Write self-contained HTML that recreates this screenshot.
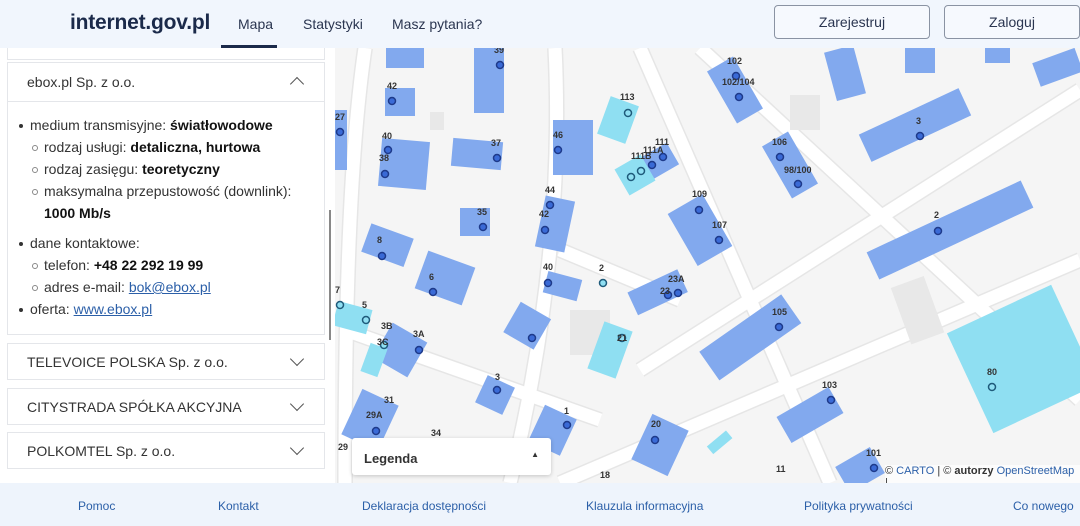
<!DOCTYPE html>
<html><head><meta charset="utf-8"><style>
*{margin:0;padding:0;box-sizing:border-box}
body{width:1080px;height:526px;overflow:hidden;font-family:"Liberation Sans",sans-serif;background:#fff;position:relative}
.hdr{position:absolute;left:0;top:0;width:1080px;height:48px;background:#f1f6fd;z-index:5}
.logo{position:absolute;left:70px;top:11px;font-size:21px;font-weight:bold;color:#1b2a4a;letter-spacing:-0.2px}
.nav{position:absolute;top:16px;font-size:14px;color:#2a3550}
.ul{position:absolute;left:221px;top:45px;width:56px;height:3px;background:#1b2a4a}
.btn{position:absolute;top:5px;height:34px;border:1px solid #8a93a3;border-radius:4px;background:#f6f9fe;font-size:14px;color:#2a3550;text-align:center;line-height:32px}
.left{position:absolute;left:0;top:48px;width:335px;height:435px;background:#fff;overflow:hidden}
.card{position:absolute;left:7px;width:318px;border:1px solid #e4e6ea;background:#fff;font-size:14px;color:#333}
.ch{height:38px;line-height:38px;padding-left:19px}
.chev{position:absolute;right:22px;top:10px;width:10px;height:10px;border-right:1.5px solid #555;border-bottom:1.5px solid #555;transform:rotate(45deg)}
.chev.up{transform:rotate(-135deg);top:16px}
.body{padding:12px 0 0 10px;border-top:1px solid #e4e6ea;font-size:14px;line-height:22px;color:#333}
.body b{color:#111}
.l1{position:relative;padding-left:12px}
.l1:before{content:"";position:absolute;left:1px;top:10px;width:4px;height:4px;border-radius:50%;background:#333}
.l2{position:relative;padding-left:26px}
.l2:before{content:"";position:absolute;left:14px;top:9px;width:4px;height:4px;border-radius:50%;border:1px solid #888}
a{color:#2b5fa8;text-decoration:underline}
.map{position:absolute;left:335px;top:48px;width:745px;height:435px;background:#f5f5f5;overflow:hidden}
.ftr{position:absolute;left:0;top:483px;width:1080px;height:43px;background:#eef4fc}
.ftr span{position:absolute;top:16px;font-size:12px;color:#2b5fa8}
.leg{position:absolute;left:352px;top:438px;width:199px;height:37px;background:#fff;border-radius:3px;box-shadow:0 1px 4px rgba(0,0,0,.2);font-size:13px;font-weight:bold;color:#333;padding:13px 0 0 12px}
.attr{position:absolute;left:885px;top:465px;font-size:11px;color:#333;background:rgba(255,255,255,.7)}
</style></head><body>
<div class="hdr">
<div class="logo">internet.gov.pl</div>
<div class="nav" style="left:238px">Mapa</div>
<div class="nav" style="left:303px">Statystyki</div>
<div class="nav" style="left:392px">Masz pytania?</div>
<div class="ul"></div>
<div class="btn" style="left:774px;width:156px">Zarejestruj</div>
<div class="btn" style="left:944px;width:136px">Zaloguj</div>
</div>
<div class="left">
<div class="card" style="top:-10px;height:22px"></div>
<div class="card" style="top:14px;height:273px">
<div class="ch">ebox.pl Sp. z o.o.</div><div class="chev up"></div>
<div class="body">
<div class="l1">medium transmisyjne: <b>światłowodowe</b></div>
<div class="l2">rodzaj usługi: <b>detaliczna, hurtowa</b></div>
<div class="l2">rodzaj zasięgu: <b>teoretyczny</b></div>
<div class="l2">maksymalna przepustowość (downlink):<br><b>1000 Mb/s</b></div>
<div class="l1" style="margin-top:8px">dane kontaktowe:</div>
<div class="l2">telefon: <b>+48 22 292 19 99</b></div>
<div class="l2">adres e-mail: <a>bok@ebox.pl</a></div>
<div class="l1">oferta: <a>www.ebox.pl</a></div>
</div></div>
<div class="card" style="top:295px;height:37px"><div class="ch" style="line-height:36px">TELEVOICE POLSKA Sp. z o.o.</div><div class="chev"></div></div>
<div class="card" style="top:340px;height:37px"><div class="ch" style="line-height:36px">CITYSTRADA SPÓŁKA AKCYJNA</div><div class="chev"></div></div>
<div class="card" style="top:384px;height:37px"><div class="ch" style="line-height:36px">POLKOMTEL Sp. z o.o.</div><div class="chev"></div></div>
<div style="position:absolute;left:329px;top:162px;width:2px;height:130px;background:#888"></div>
</div>
<div class="map">
<svg width="745" height="435" viewBox="335 48 745 435" xmlns="http://www.w3.org/2000/svg" font-family="Liberation Sans" font-size="9" font-weight="bold" fill="#333">
<g stroke="#e6e6e6" stroke-width="16" fill="none"><path d="M365 48 C350 150 345 300 345 483"/><path d="M555 48 C560 150 555 300 510 483"/><path d="M640 48 L830 483"/><path d="M700 48 L1080 400"/><path d="M640 370 L1080 90"/><path d="M345 330 L600 420"/><path d="M560 250 L680 300"/><path d="M560 483 L1080 260"/></g>
<g stroke="#fff" stroke-width="13" fill="none"><path d="M365 48 C350 150 345 300 345 483"/><path d="M555 48 C560 150 555 300 510 483"/><path d="M640 48 L830 483"/><path d="M700 48 L1080 400"/><path d="M640 370 L1080 90"/><path d="M345 330 L600 420"/><path d="M560 250 L680 300"/><path d="M560 483 L1080 260"/></g>
<g fill="#e8e8e8"><rect x="430" y="112" width="14" height="18"/><rect x="790" y="95" width="30" height="35"/><rect x="900" y="280" width="35" height="60" transform="rotate(-20 918 310)"/><rect x="570" y="310" width="40" height="45"/></g>
<g fill="#82a9ee">
<rect x="386" y="48" width="38" height="20"/><rect x="474" y="48" width="30" height="65"/><rect x="385" y="88" width="30" height="28"/><rect x="335" y="110" width="12" height="60"/>
<rect x="380" y="140" width="48" height="48" transform="rotate(5 404 164)"/><rect x="452" y="140" width="50" height="28" transform="rotate(5 477 154)"/><rect x="553" y="120" width="40" height="55"/><rect x="460" y="208" width="30" height="28"/>
<rect x="540" y="198" width="30" height="52" transform="rotate(12 555 224)"/><rect x="365" y="230" width="45" height="30" transform="rotate(20 387 245)"/><rect x="420" y="258" width="50" height="40" transform="rotate(20 445 278)"/><rect x="545" y="275" width="35" height="22" transform="rotate(15 562 286)"/>
<rect x="510" y="308" width="35" height="35" transform="rotate(30 527 325)"/><rect x="380" y="330" width="40" height="40" transform="rotate(30 400 350)"/><rect x="480" y="380" width="30" height="30" transform="rotate(25 495 395)"/><rect x="350" y="395" width="40" height="50" transform="rotate(25 370 420)"/>
<rect x="535" y="410" width="35" height="40" transform="rotate(25 552 430)"/><rect x="640" y="420" width="40" height="50" transform="rotate(25 660 445)"/><rect x="630" y="280" width="55" height="25" transform="rotate(-25 657 292)"/>
<rect x="680" y="200" width="40" height="60" transform="rotate(-30 700 230)"/><rect x="720" y="60" width="30" height="60" transform="rotate(-30 735 90)"/><rect x="775" y="135" width="30" height="60" transform="rotate(-30 790 165)"/>
<rect x="830" y="48" width="30" height="50" transform="rotate(-15 845 73)"/><rect x="905" y="48" width="30" height="25"/><rect x="985" y="48" width="25" height="15"/><rect x="1035" y="55" width="45" height="25" transform="rotate(-20 1057 67)"/>
<rect x="860" y="110" width="110" height="30" transform="rotate(-25 915 125)"/><rect x="865" y="215" width="170" height="30" transform="rotate(-25 950 230)"/><rect x="700" y="320" width="100" height="35" transform="rotate(-35 750 337)"/>
<rect x="780" y="400" width="60" height="30" transform="rotate(-30 810 415)"/><rect x="840" y="455" width="40" height="30" transform="rotate(-30 860 470)"/><rect x="640" y="150" width="35" height="25" transform="rotate(-30 657 162)"/>
</g>
<g fill="#8fdff2"><rect x="603" y="100" width="30" height="40" transform="rotate(20 618 120)"/><rect x="620" y="160" width="30" height="30" transform="rotate(-30 635 175)"/><rect x="335" y="305" width="35" height="25" transform="rotate(15 352 317)"/><rect x="595" y="325" width="30" height="50" transform="rotate(20 610 350)"/><rect x="965" y="305" width="115" height="110" transform="rotate(-25 1020 360)"/><rect x="365" y="345" width="18" height="30" transform="rotate(20 374 360)"/><rect x="715" y="430" width="10" height="25" transform="rotate(50 720 442)"/></g>
<g fill="#3a6ad6" stroke="#1e3a8a" stroke-width="1.5">
<circle cx="500" cy="65" r="3.5"/><circle cx="392" cy="101" r="3.5"/><circle cx="340" cy="132" r="3.5"/><circle cx="388" cy="150" r="3.5"/><circle cx="385" cy="174" r="3.5"/><circle cx="497" cy="158" r="3.5"/><circle cx="558" cy="150" r="3.5"/><circle cx="652" cy="165" r="3.5"/><circle cx="663" cy="157" r="3.5"/><circle cx="550" cy="205" r="3.5"/><circle cx="545" cy="230" r="3.5"/><circle cx="483" cy="227" r="3.5"/><circle cx="382" cy="256" r="3.5"/><circle cx="433" cy="292" r="3.5"/><circle cx="548" cy="283" r="3.5"/><circle cx="532" cy="338" r="3.5"/><circle cx="419" cy="350" r="3.5"/><circle cx="497" cy="390" r="3.5"/><circle cx="376" cy="431" r="3.5"/><circle cx="567" cy="425" r="3.5"/><circle cx="655" cy="440" r="3.5"/><circle cx="668" cy="295" r="3.5"/><circle cx="678" cy="293" r="3.5"/><circle cx="699" cy="210" r="3.5"/><circle cx="719" cy="240" r="3.5"/><circle cx="736" cy="76" r="3.5"/><circle cx="739" cy="97" r="3.5"/><circle cx="780" cy="157" r="3.5"/><circle cx="798" cy="184" r="3.5"/><circle cx="920" cy="136" r="3.5"/><circle cx="938" cy="231" r="3.5"/><circle cx="779" cy="327" r="3.5"/><circle cx="831" cy="400" r="3.5"/><circle cx="874" cy="468" r="3.5"/></g>
<g fill="#8fdff2" stroke="#1e5a7a" stroke-width="1.5"><circle cx="628" cy="113" r="3.5"/><circle cx="631" cy="177" r="3.5"/><circle cx="641" cy="171" r="3.5"/><circle cx="340" cy="305" r="3.5"/><circle cx="366" cy="320" r="3.5"/><circle cx="603" cy="283" r="3.5"/><circle cx="622" cy="338" r="3.5"/><circle cx="384" cy="345" r="3.5"/><circle cx="992" cy="387" r="3.5"/></g>
<text x="494" y="53">39</text><text x="387" y="89">42</text><text x="335" y="120">27</text><text x="382" y="139">40</text><text x="379" y="161">38</text><text x="491" y="146">37</text><text x="553" y="138">46</text><text x="620" y="100">113</text><text x="655" y="145">111</text><text x="643" y="153">111A</text><text x="631" y="159">111B</text><text x="545" y="193">44</text><text x="539" y="217">42</text><text x="477" y="215">35</text><text x="377" y="243">8</text><text x="429" y="280">6</text><text x="543" y="270">40</text><text x="599" y="271">2</text><text x="668" y="282">23A</text><text x="660" y="294">23</text><text x="692" y="197">109</text><text x="712" y="228">107</text><text x="727" y="64">102</text><text x="722" y="85">102/104</text><text x="772" y="145">106</text><text x="784" y="173">98/100</text><text x="916" y="124">3</text><text x="934" y="218">2</text><text x="335" y="293">7</text><text x="362" y="308">5</text><text x="381" y="329">3B</text><text x="413" y="337">3A</text><text x="377" y="345">3C</text><text x="617" y="341">21</text><text x="772" y="315">105</text><text x="495" y="380">3</text><text x="384" y="403">31</text><text x="366" y="418">29A</text><text x="564" y="414">1</text><text x="651" y="427">20</text><text x="822" y="388">103</text><text x="866" y="456">101</text><text x="431" y="436">34</text><text x="338" y="450">29</text><text x="776" y="472">11</text><text x="600" y="478">18</text><text x="987" y="375">80</text>
</svg>
</div>
<div class="leg">Legenda<span style="position:absolute;right:12px;top:12px;font-size:8px">▲</span></div>
<div class="attr">© <span style="color:#2b5fa8">CARTO</span> | © <b>autorzy</b> <span style="color:#2b5fa8">OpenStreetMap</span> | </div>
<div class="ftr">
<span style="left:78px">Pomoc</span><span style="left:218px">Kontakt</span><span style="left:362px">Deklaracja dostępności</span><span style="left:586px">Klauzula informacyjna</span><span style="left:804px">Polityka prywatności</span><span style="left:1013px">Co nowego</span>
</div>
</body></html>
